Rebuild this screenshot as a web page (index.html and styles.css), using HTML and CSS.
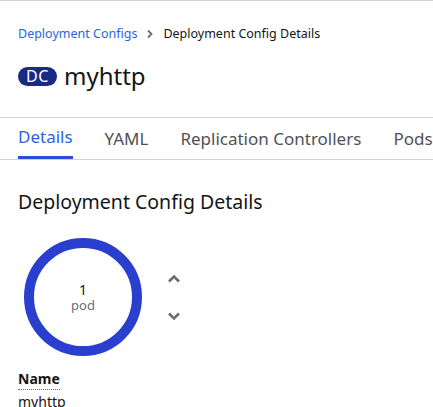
FILE: index.html
```html
<!DOCTYPE html>
<html>
<head>
<meta charset="utf-8">
<link rel="stylesheet" href="styles.css">
</head>
<body>
<div class="page">
  <div class="header">
    <nav class="breadcrumb">
      <a class="crumb-link">Deployment Configs</a>
      <svg class="crumb-sep" width="8" height="10" viewBox="0 0 8 10"><path d="M2 1.5 L5.5 5 L2 8.5" fill="none" stroke="#6a6e73" stroke-width="1.8"/></svg>
      <span class="crumb-current">Deployment Config Details</span>
    </nav>
    <h1 class="title"><span class="badge">DC</span><span class="name">myhttp</span></h1>
  </div>
  <div class="tabs">
    <div class="tab active">Details</div>
    <div class="tab">YAML</div>
    <div class="tab">Replication Controllers</div>
    <div class="tab">Pods</div>
  </div>
  <div class="content">
    <h2 class="section-title">Deployment Config Details</h2>
    <div class="pods">
      <div class="donut">
        <div class="count">1</div>
        <div class="unit">pod</div>
      </div>
      <div class="arrows">
        <svg width="14" height="10" viewBox="0 0 14 10"><path d="M2 7.5 L7 2.5 L12 7.5" fill="none" stroke="#6a6e73" stroke-width="2.6"/></svg>
        <svg width="14" height="10" viewBox="0 0 14 10"><path d="M2 2.5 L7 7.5 L12 2.5" fill="none" stroke="#6a6e73" stroke-width="2.6"/></svg>
      </div>
    </div>
    <dl class="details">
      <dt><span class="term">Name</span></dt>
      <dd>myhttp</dd>
    </dl>
  </div>
</div>
</body>
</html>
```
FILE: styles.css
```css
html, body {
  margin: 0;
  padding: 0;
  background: #fff;
}
body {
  font-family: "Noto Sans", "Open Sans", sans-serif;
  color: #151515;
  overflow: hidden;
}
.page {
  border-top: 1px solid #d2d2d2;
}
.header {
  padding: 23px 18px 23px;
}
.breadcrumb {
  display: flex;
  align-items: center;
  gap: 9px;
  font-size: 12.5px;
  line-height: 20px;
  height: 20px;
}
.crumb-link {
  color: #2b63dc;
}
.crumb-current {
  color: #151515;
}
.title {
  display: flex;
  align-items: center;
  gap: 7px;
  margin: 14px 0 0;
  font-weight: 400;
  height: 36px;
}
.badge {
  display: inline-flex;
  align-items: center;
  justify-content: center;
  background: #172a84;
  color: #fff;
  font-size: 16px;
  line-height: 19px;
  height: 19px;
  width: 39px;
  border-radius: 10px;
  letter-spacing: 0.5px;
}
.name {
  font-size: 24px;
  line-height: 36px;
}
.tabs {
  display: flex;
  border-top: 1px solid #d2d2d2;
  border-bottom: 1px solid #d2d2d2;
  padding-left: 18px;
  gap: 32px;
  white-space: nowrap;
}
.tab {
  font-size: 17px;
  line-height: 41px;
  color: #4f5255;
  height: 41px;
  box-sizing: border-box;
  flex: none;
}
.tab.active {
  color: #2b63dc;
  border-bottom: 3px solid #2b4fd6;
  line-height: 38px;
}
.content {
  padding: 28px 18px 0;
}
.section-title {
  margin: 0;
  font-size: 19.5px;
  font-weight: 400;
  line-height: 28px;
}
.pods {
  display: flex;
  align-items: center;
  margin-top: 22px;
  gap: 25px;
}
.donut {
  width: 118px;
  height: 118px;
  margin-left: 6px;
  box-sizing: border-box;
  border: 10px solid #2b3fcf;
  border-radius: 50%;
  display: flex;
  flex-direction: column;
  align-items: center;
  justify-content: center;
}
.count {
  font-size: 14px;
  line-height: 16px;
  color: #151515;
}
.unit {
  font-size: 13px;
  line-height: 15px;
  color: #6a6e73;
}
.arrows {
  display: flex;
  flex-direction: column;
  gap: 27px;
}
.arrows svg {
  display: block;
}
.details {
  margin: 13px 0 0;
}
.details dt {
  font-size: 14px;
  font-weight: 700;
  line-height: 20px;
}
.term {
  border-bottom: 1px dotted #6a6e73;
  padding-bottom: 1px;
}
.details dd {
  margin: 3px 0 0;
  font-size: 14px;
  line-height: 20px;
}
```
